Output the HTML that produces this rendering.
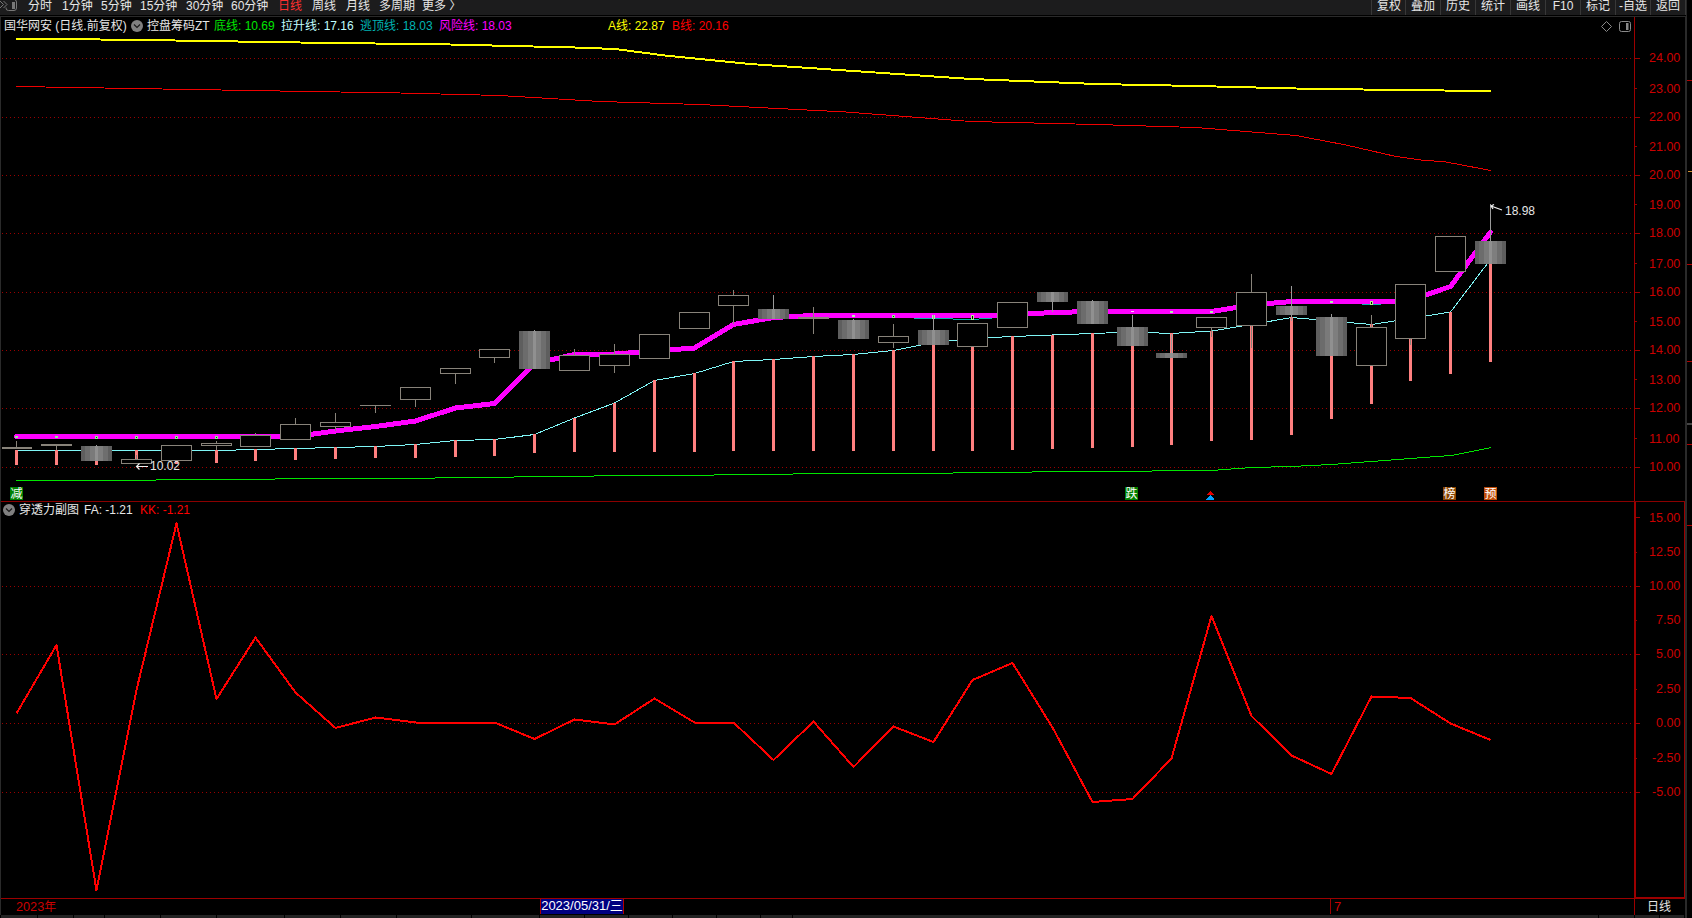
<!DOCTYPE html><html><head><meta charset="utf-8"><title>chart</title><style>
html,body{margin:0;padding:0;background:#000;}
body{width:1692px;height:918px;overflow:hidden;position:relative;font-family:"Liberation Sans","Noto Sans CJK SC",sans-serif;font-size:12px;color:#e6e6e6;}
.t{position:absolute;white-space:nowrap;line-height:14px;height:14px;}
#top{position:absolute;left:0;top:0;width:1685px;height:15px;background:#1c1c1d;}
#topb{position:absolute;left:0;top:15px;width:1686px;height:1px;background:#000;}
#topl{position:absolute;left:0;top:16px;width:1687px;height:1px;background:#2a2a2a;}
.sep{position:absolute;top:0;width:1px;height:15px;background:#383838;}
.ax{position:absolute;left:1649px;width:34px;font-size:12.5px;text-align:left;color:#cc0000;line-height:14px;height:14px;}
.ic{position:absolute;width:13px;height:12px;padding-top:1px;line-height:13px;font-size:12px;color:#fff;text-align:center;overflow:hidden;}
.circ{position:absolute;width:12px;height:12px;border-radius:6px;background:#808080;}
#bot{position:absolute;left:1px;top:915px;width:1684px;height:3px;background:#232323;}
.bs{position:absolute;top:915px;width:1px;height:3px;background:#000;}
</style></head><body>
<div id="top"></div><div id="topb"></div><div id="topl"></div>
<svg width="1692" height="918" viewBox="0 0 1692 918" shape-rendering="crispEdges" style="position:absolute;left:0;top:0">
<defs><linearGradient id="g" x1="0" x2="1" y1="0" y2="0">
<stop offset="0" stop-color="#5e5e5e"/>
<stop offset="0.13" stop-color="#5e5e5e"/>
<stop offset="0.13" stop-color="#6c6c6c"/>
<stop offset="0.29" stop-color="#6c6c6c"/>
<stop offset="0.29" stop-color="#7a7a7a"/>
<stop offset="0.45" stop-color="#7a7a7a"/>
<stop offset="0.45" stop-color="#909090"/>
<stop offset="0.55" stop-color="#909090"/>
<stop offset="0.55" stop-color="#7e7e7e"/>
<stop offset="0.71" stop-color="#7e7e7e"/>
<stop offset="0.71" stop-color="#6e6e6e"/>
<stop offset="0.87" stop-color="#6e6e6e"/>
<stop offset="0.87" stop-color="#5e5e5e"/>
<stop offset="1" stop-color="#5e5e5e"/>
</linearGradient></defs>
<line x1="2" x2="1632" y1="58.5" y2="58.5" stroke="#9a0000" stroke-width="1" stroke-dasharray="1 3"/>
<line x1="2" x2="1632" y1="117.5" y2="117.5" stroke="#9a0000" stroke-width="1" stroke-dasharray="1 3"/>
<line x1="2" x2="1632" y1="175.5" y2="175.5" stroke="#9a0000" stroke-width="1" stroke-dasharray="1 3"/>
<line x1="2" x2="1632" y1="233.5" y2="233.5" stroke="#9a0000" stroke-width="1" stroke-dasharray="1 3"/>
<line x1="2" x2="1632" y1="292.5" y2="292.5" stroke="#9a0000" stroke-width="1" stroke-dasharray="1 3"/>
<line x1="2" x2="1632" y1="350.5" y2="350.5" stroke="#9a0000" stroke-width="1" stroke-dasharray="1 3"/>
<line x1="2" x2="1632" y1="408.5" y2="408.5" stroke="#9a0000" stroke-width="1" stroke-dasharray="1 3"/>
<line x1="2" x2="1632" y1="467.5" y2="467.5" stroke="#9a0000" stroke-width="1" stroke-dasharray="1 3"/>
<line x1="2" x2="1632" y1="586.5" y2="586.5" stroke="#9a0000" stroke-width="1" stroke-dasharray="1 3"/>
<line x1="2" x2="1632" y1="654.5" y2="654.5" stroke="#9a0000" stroke-width="1" stroke-dasharray="1 3"/>
<line x1="2" x2="1632" y1="723.5" y2="723.5" stroke="#9a0000" stroke-width="1" stroke-dasharray="1 3"/>
<line x1="2" x2="1632" y1="792.5" y2="792.5" stroke="#9a0000" stroke-width="1" stroke-dasharray="1 3"/>
<polyline points="16,39 100,39.5 175,40.5 300,42.5 450,44.5 575,47.5 615,49 665,55.5 750,64 846,70.5 971,79 1096,84 1196,86 1296,88.5 1396,90 1491,91" fill="none" stroke="#ffff00" stroke-width="2"/>
<polyline points="16,86.5 250,90.5 400,93 500,95.5 600,101.5 700,104.5 846,112 971,121.5 1096,124.5 1196,127.5 1296,135.5 1346,145 1396,156.5 1421,160 1446,162 1491,170.5" fill="none" stroke="#f00000" stroke-width="1"/>
<rect x="16" y="480" width="140" height="1" fill="#00e600"/>
<rect x="156" y="479" width="119" height="1" fill="#00e600"/>
<rect x="275" y="478" width="160" height="1" fill="#00e600"/>
<rect x="435" y="477" width="79" height="1" fill="#00e600"/>
<rect x="514" y="476" width="80" height="1" fill="#00e600"/>
<rect x="594" y="475" width="120" height="1" fill="#00e600"/>
<rect x="714" y="474" width="79" height="1" fill="#00e600"/>
<rect x="793" y="473" width="160" height="1" fill="#00e600"/>
<rect x="953" y="472" width="79" height="1" fill="#00e600"/>
<rect x="1032" y="471" width="120" height="1" fill="#00e600"/>
<rect x="1152" y="470" width="66" height="1" fill="#00e600"/>
<rect x="1218" y="469" width="13" height="1" fill="#00e600"/>
<rect x="1231" y="468" width="14" height="1" fill="#00e600"/>
<rect x="1245" y="467" width="26" height="1" fill="#00e600"/>
<rect x="1271" y="466" width="30" height="1" fill="#00e600"/>
<rect x="1301" y="465" width="20" height="1" fill="#00e600"/>
<rect x="1321" y="464" width="17" height="1" fill="#00e600"/>
<rect x="1338" y="463" width="13" height="1" fill="#00e600"/>
<rect x="1351" y="462" width="13" height="1" fill="#00e600"/>
<rect x="1364" y="461" width="14" height="1" fill="#00e600"/>
<rect x="1378" y="460" width="13" height="1" fill="#00e600"/>
<rect x="1391" y="459" width="13" height="1" fill="#00e600"/>
<rect x="1404" y="458" width="13" height="1" fill="#00e600"/>
<rect x="1417" y="457" width="13" height="1" fill="#00e600"/>
<rect x="1430" y="456" width="14" height="1" fill="#00e600"/>
<rect x="1444" y="455" width="10" height="1" fill="#00e600"/>
<polyline points="1454,455 1491,447.6" fill="none" stroke="#00e600" stroke-width="1"/>
<g stroke="#ff00ff" stroke-width="5" stroke-linecap="round">
<line x1="16.5" y1="436.5" x2="16.5" y2="436.5"/>
<line x1="16.5" y1="436.5" x2="56.5" y2="436.5"/>
<line x1="56.5" y1="436.5" x2="96.5" y2="436.5"/>
<line x1="96.5" y1="436.5" x2="136.5" y2="436.5"/>
<line x1="136.5" y1="436.5" x2="176.5" y2="436.5"/>
<line x1="176.5" y1="436.5" x2="216.5" y2="436.5"/>
<line x1="216.5" y1="436.5" x2="255.5" y2="436.5"/>
<line x1="255.5" y1="436.5" x2="295.5" y2="436.5"/>
<line x1="295.5" y1="436.5" x2="335.5" y2="431"/>
<line x1="335.5" y1="431" x2="375.5" y2="426.5"/>
<line x1="375.5" y1="426.5" x2="415.5" y2="421"/>
<line x1="415.5" y1="421" x2="455.5" y2="408"/>
<line x1="455.5" y1="408" x2="494.5" y2="403.5"/>
<line x1="494.5" y1="403.5" x2="534.5" y2="363.5"/>
<line x1="534.5" y1="363.5" x2="574.5" y2="354.5"/>
<line x1="574.5" y1="354.5" x2="614.5" y2="354"/>
<line x1="614.5" y1="354" x2="654.5" y2="351"/>
<line x1="654.5" y1="351" x2="694.5" y2="348"/>
<line x1="694.5" y1="348" x2="733.5" y2="324.5"/>
<line x1="733.5" y1="324.5" x2="773.5" y2="317.5"/>
<line x1="773.5" y1="317.5" x2="813.5" y2="315.5"/>
<line x1="813.5" y1="315.5" x2="853.5" y2="315.5"/>
<line x1="853.5" y1="315.5" x2="893.5" y2="315.5"/>
<line x1="893.5" y1="315.5" x2="933.5" y2="315.5"/>
<line x1="933.5" y1="315.5" x2="972.5" y2="315.5"/>
<line x1="972.5" y1="315.5" x2="1012.5" y2="315"/>
<line x1="1012.5" y1="315" x2="1052.5" y2="312.5"/>
<line x1="1052.5" y1="312.5" x2="1092.5" y2="311.5"/>
<line x1="1092.5" y1="311.5" x2="1132.5" y2="311.5"/>
<line x1="1132.5" y1="311.5" x2="1171.5" y2="311.5"/>
<line x1="1171.5" y1="311.5" x2="1211.5" y2="311.5"/>
<line x1="1211.5" y1="311.5" x2="1251.5" y2="305"/>
<line x1="1251.5" y1="305" x2="1291.5" y2="301.5"/>
<line x1="1291.5" y1="301.5" x2="1331.5" y2="301.5"/>
<line x1="1331.5" y1="301.5" x2="1371.5" y2="301.5"/>
<line x1="1371.5" y1="301.5" x2="1395" y2="301.5"/>
<line x1="1395" y1="301.5" x2="1410.5" y2="300"/>
<line x1="1410.5" y1="300" x2="1450.5" y2="286.5"/>
<line x1="1450.5" y1="286.5" x2="1490.5" y2="232"/>
</g>
<rect x="914" y="318" width="39" height="1" fill="#00b4aa"/><rect x="953" y="319" width="26" height="1" fill="#00b4aa"/><rect x="979" y="318" width="13" height="1" fill="#00b4aa"/>
<rect x="1362" y="304" width="19" height="1" fill="#00b4aa"/>
<polyline points="16.5,450.5 56.5,450.5 96.5,450.5 136.5,450.5 176.5,450.5 216.5,450.5 255.5,449.5 295.5,448.5 335.5,447.5 375.5,446.5 415.5,444.5 455.5,440.5 494.5,439.5 534.5,434.5 574.5,418 614.5,403 654.5,380.5 694.5,373.5 733.5,361.5 773.5,359.5 813.5,356.5 853.5,354.5 893.5,350.5 933.5,342.5 972.5,338.5 1012.5,336.5 1052.5,335 1092.5,333.5 1132.5,332 1171.5,333.5 1211.5,331 1251.5,324.5 1291.5,317.5 1331.5,321 1371.5,324.5 1410.5,318.5 1450.5,312 1490.5,259.5" fill="none" stroke="#7ff6f6" stroke-width="1"/>
<rect x="15" y="450" width="3" height="15" fill="#ff8080"/>
<rect x="55" y="450" width="3" height="15" fill="#ff8080"/>
<rect x="95" y="450" width="3" height="15" fill="#ff8080"/>
<rect x="135" y="450" width="3" height="13" fill="#ff8080"/>
<rect x="175" y="450" width="3" height="14" fill="#ff8080"/>
<rect x="215" y="450" width="3" height="13" fill="#ff8080"/>
<rect x="254" y="449" width="3" height="12" fill="#ff8080"/>
<rect x="294" y="448" width="3" height="12" fill="#ff8080"/>
<rect x="334" y="447" width="3" height="12" fill="#ff8080"/>
<rect x="374" y="446" width="3" height="12" fill="#ff8080"/>
<rect x="414" y="444" width="3" height="14" fill="#ff8080"/>
<rect x="454" y="440" width="3" height="17" fill="#ff8080"/>
<rect x="493" y="439" width="3" height="17" fill="#ff8080"/>
<rect x="533" y="434" width="3" height="19" fill="#ff8080"/>
<rect x="573" y="418" width="3" height="34" fill="#ff8080"/>
<rect x="613" y="403" width="3" height="49" fill="#ff8080"/>
<rect x="653" y="380" width="3" height="72" fill="#ff8080"/>
<rect x="693" y="373" width="3" height="79" fill="#ff8080"/>
<rect x="732" y="361" width="3" height="90" fill="#ff8080"/>
<rect x="772" y="359" width="3" height="92" fill="#ff8080"/>
<rect x="812" y="356" width="3" height="95" fill="#ff8080"/>
<rect x="852" y="354" width="3" height="97" fill="#ff8080"/>
<rect x="892" y="350" width="3" height="101" fill="#ff8080"/>
<rect x="932" y="342" width="3" height="109" fill="#ff8080"/>
<rect x="971" y="338" width="3" height="113" fill="#ff8080"/>
<rect x="1011" y="336" width="3" height="114" fill="#ff8080"/>
<rect x="1051" y="335" width="3" height="114" fill="#ff8080"/>
<rect x="1091" y="333" width="3" height="115" fill="#ff8080"/>
<rect x="1131" y="332" width="3" height="115" fill="#ff8080"/>
<rect x="1170" y="333" width="3" height="112" fill="#ff8080"/>
<rect x="1210" y="331" width="3" height="110" fill="#ff8080"/>
<rect x="1250" y="324" width="3" height="116" fill="#ff8080"/>
<rect x="1290" y="317" width="3" height="118" fill="#ff8080"/>
<rect x="1330" y="321" width="3" height="98" fill="#ff8080"/>
<rect x="1370" y="324" width="3" height="80" fill="#ff8080"/>
<rect x="1409" y="318" width="3" height="63" fill="#ff8080"/>
<rect x="1449" y="312" width="3" height="62" fill="#ff8080"/>
<rect x="1489" y="264" width="3" height="98" fill="#ff8080"/>
<rect x="16" y="441" width="1" height="8" fill="#88837a"/>
<rect x="2" y="447" width="30" height="2" fill="#88837a"/>
<rect x="56" y="444" width="1" height="6" fill="#88837a"/>
<rect x="41" y="444" width="31" height="2" fill="#88837a"/>
<rect x="96" y="445" width="1" height="16" fill="#9a9a9a"/>
<rect x="81" y="446" width="31" height="15" fill="url(#g)"/>
<rect x="136" y="455" width="1" height="9" fill="#88837a"/>
<rect x="121" y="459" width="31" height="5" fill="#88837a"/>
<rect x="122" y="460" width="29" height="3" fill="#000"/>
<rect x="176" y="445" width="1" height="16" fill="#88837a"/>
<rect x="161" y="445" width="31" height="16" fill="#88837a"/>
<rect x="162" y="446" width="29" height="14" fill="#000"/>
<rect x="216" y="441" width="1" height="9" fill="#88837a"/>
<rect x="201" y="443" width="31" height="3" fill="#88837a"/>
<rect x="202" y="444" width="29" height="1" fill="#000"/>
<rect x="255" y="433" width="1" height="14" fill="#88837a"/>
<rect x="240" y="435" width="31" height="12" fill="#88837a"/>
<rect x="241" y="436" width="29" height="10" fill="#000"/>
<rect x="295" y="418" width="1" height="22" fill="#88837a"/>
<rect x="280" y="424" width="31" height="16" fill="#88837a"/>
<rect x="281" y="425" width="29" height="14" fill="#000"/>
<rect x="335" y="413" width="1" height="18" fill="#88837a"/>
<rect x="320" y="422" width="31" height="5" fill="#88837a"/>
<rect x="321" y="423" width="29" height="3" fill="#000"/>
<rect x="375" y="405" width="1" height="8" fill="#88837a"/>
<rect x="360" y="405" width="31" height="1" fill="#88837a"/>
<rect x="415" y="387" width="1" height="20" fill="#88837a"/>
<rect x="400" y="387" width="31" height="13" fill="#88837a"/>
<rect x="401" y="388" width="29" height="11" fill="#000"/>
<rect x="455" y="368" width="1" height="16" fill="#88837a"/>
<rect x="440" y="368" width="31" height="6" fill="#88837a"/>
<rect x="441" y="369" width="29" height="4" fill="#000"/>
<rect x="494" y="349" width="1" height="14" fill="#88837a"/>
<rect x="479" y="349" width="31" height="9" fill="#88837a"/>
<rect x="480" y="350" width="29" height="7" fill="#000"/>
<rect x="534" y="330" width="1" height="39" fill="#9a9a9a"/>
<rect x="519" y="331" width="31" height="38" fill="url(#g)"/>
<rect x="574" y="349" width="1" height="22" fill="#88837a"/>
<rect x="559" y="355" width="31" height="16" fill="#88837a"/>
<rect x="560" y="356" width="29" height="14" fill="#000"/>
<rect x="614" y="344" width="1" height="29" fill="#88837a"/>
<rect x="599" y="354" width="31" height="12" fill="#88837a"/>
<rect x="600" y="355" width="29" height="10" fill="#000"/>
<rect x="654" y="334" width="1" height="25" fill="#88837a"/>
<rect x="639" y="334" width="31" height="25" fill="#88837a"/>
<rect x="640" y="335" width="29" height="23" fill="#000"/>
<rect x="694" y="312" width="1" height="17" fill="#88837a"/>
<rect x="679" y="312" width="31" height="17" fill="#88837a"/>
<rect x="680" y="313" width="29" height="15" fill="#000"/>
<rect x="733" y="290" width="1" height="34" fill="#88837a"/>
<rect x="718" y="295" width="31" height="11" fill="#88837a"/>
<rect x="719" y="296" width="29" height="9" fill="#000"/>
<rect x="773" y="295" width="1" height="24" fill="#9a9a9a"/>
<rect x="758" y="309" width="31" height="10" fill="url(#g)"/>
<rect x="813" y="307" width="1" height="27" fill="#88837a"/>
<rect x="798" y="317" width="31" height="2" fill="#88837a"/>
<rect x="853" y="319" width="1" height="20" fill="#9a9a9a"/>
<rect x="838" y="320" width="31" height="19" fill="url(#g)"/>
<rect x="893" y="324" width="1" height="24" fill="#88837a"/>
<rect x="878" y="336" width="31" height="7" fill="#88837a"/>
<rect x="879" y="337" width="29" height="5" fill="#000"/>
<rect x="933" y="315" width="1" height="30" fill="#9a9a9a"/>
<rect x="918" y="330" width="31" height="15" fill="url(#g)"/>
<rect x="972" y="323" width="1" height="24" fill="#88837a"/>
<rect x="957" y="323" width="31" height="24" fill="#88837a"/>
<rect x="958" y="324" width="29" height="22" fill="#000"/>
<rect x="1012" y="302" width="1" height="26" fill="#88837a"/>
<rect x="997" y="302" width="31" height="26" fill="#88837a"/>
<rect x="998" y="303" width="29" height="24" fill="#000"/>
<rect x="1052" y="292" width="1" height="20" fill="#9a9a9a"/>
<rect x="1037" y="292" width="31" height="10" fill="url(#g)"/>
<rect x="1092" y="300" width="1" height="24" fill="#9a9a9a"/>
<rect x="1077" y="301" width="31" height="23" fill="url(#g)"/>
<rect x="1132" y="315" width="1" height="31" fill="#9a9a9a"/>
<rect x="1117" y="327" width="31" height="19" fill="url(#g)"/>
<rect x="1171" y="334" width="1" height="24" fill="#9a9a9a"/>
<rect x="1156" y="353" width="31" height="5" fill="url(#g)"/>
<rect x="1211" y="317" width="1" height="20" fill="#88837a"/>
<rect x="1196" y="317" width="31" height="11" fill="#88837a"/>
<rect x="1197" y="318" width="29" height="9" fill="#000"/>
<rect x="1251" y="274" width="1" height="74" fill="#88837a"/>
<rect x="1236" y="292" width="31" height="34" fill="#88837a"/>
<rect x="1237" y="293" width="29" height="32" fill="#000"/>
<rect x="1291" y="286" width="1" height="35" fill="#9a9a9a"/>
<rect x="1276" y="306" width="31" height="9" fill="url(#g)"/>
<rect x="1331" y="314" width="1" height="42" fill="#9a9a9a"/>
<rect x="1316" y="317" width="31" height="39" fill="url(#g)"/>
<rect x="1371" y="315" width="1" height="51" fill="#88837a"/>
<rect x="1356" y="327" width="31" height="39" fill="#88837a"/>
<rect x="1357" y="328" width="29" height="37" fill="#000"/>
<rect x="1410" y="284" width="1" height="61" fill="#88837a"/>
<rect x="1395" y="284" width="31" height="55" fill="#88837a"/>
<rect x="1396" y="285" width="29" height="53" fill="#000"/>
<rect x="1450" y="236" width="1" height="36" fill="#88837a"/>
<rect x="1435" y="236" width="31" height="36" fill="#88837a"/>
<rect x="1436" y="237" width="29" height="34" fill="#000"/>
<rect x="1490" y="204" width="1" height="60" fill="#9a9a9a"/>
<rect x="1475" y="241" width="31" height="23" fill="url(#g)"/>
<rect x="15" y="436" width="3" height="2" fill="#90ee90"/>
<rect x="55" y="436" width="3" height="2" fill="#90ee90"/>
<rect x="95" y="436" width="3" height="3" fill="#90ee90"/><rect x="96" y="437" width="1" height="1" fill="#004000"/>
<rect x="135" y="436" width="3" height="3" fill="#90ee90"/><rect x="136" y="437" width="1" height="1" fill="#004000"/>
<rect x="175" y="436" width="3" height="3" fill="#90ee90"/><rect x="176" y="437" width="1" height="1" fill="#004000"/>
<rect x="215" y="436" width="3" height="3" fill="#90ee90"/><rect x="216" y="437" width="1" height="1" fill="#004000"/>
<rect x="892" y="315" width="3" height="3" fill="#90ee90"/><rect x="893" y="316" width="1" height="1" fill="#004000"/>
<rect x="852" y="315" width="3" height="2" fill="#b0f0b0"/>
<rect x="1170" y="311" width="3" height="2" fill="#b0f0b0"/>
<rect x="1210" y="311" width="3" height="2" fill="#b0f0b0"/>
<rect x="1330" y="301" width="3" height="2" fill="#b0f0b0"/>
<rect x="1131" y="311" width="3" height="1" fill="#ffd0ff"/>
<rect x="932" y="315" width="1" height="4" fill="#b0f0b0"/><rect x="934" y="315" width="1" height="4" fill="#b0f0b0"/>
<rect x="971" y="315" width="3" height="5" fill="#b4f090"/><rect x="972" y="316" width="1" height="3" fill="#000"/>
<rect x="1370" y="301" width="3" height="4" fill="#b4f090"/><rect x="1371" y="302" width="1" height="2" fill="#000"/>
<polyline points="16.5,713.5 56.5,645 96.5,890.5 136.5,690 176.5,523.5 216.5,699 255.5,637.5 295.5,692.5 335.5,728 375.5,717.5 415.5,722.5 455.5,722.5 494.5,722.5 534.5,739 574.5,719.5 614.5,724.5 654.5,698.5 694.5,722.5 733.5,722.5 773.5,760 813.5,721.5 853.5,767 893.5,726.5 933.5,742 972.5,680 1012.5,663 1052.5,727.5 1092.5,802 1132.5,799 1171.5,758.5 1211.5,616 1251.5,716 1291.5,755.5 1331.5,774 1371.5,696.5 1410.5,698 1450.5,723.5 1490.5,740" fill="none" stroke="#ff0000" stroke-width="2" stroke-linejoin="round"/>
<rect x="1" y="501" width="1684" height="1" fill="#8b0000"/>
<rect x="1" y="898" width="1684" height="1" fill="#9c0000"/>
<rect x="1634" y="17" width="1" height="484" fill="#9c0000"/>
<rect x="1634" y="502" width="2" height="397" fill="#9c0000"/>
<rect x="1634" y="899" width="1" height="16" fill="#9c0000"/>
<rect x="1634" y="897" width="51" height="1" fill="#9c0000"/>
<rect x="1684" y="502" width="1" height="397" fill="#9c0000"/>
<rect x="1635" y="58" width="5" height="1" fill="#9c0000"/>
<rect x="1635" y="88" width="2" height="1" fill="#9c0000"/>
<rect x="1635" y="117" width="5" height="1" fill="#9c0000"/>
<rect x="1635" y="146" width="2" height="1" fill="#9c0000"/>
<rect x="1635" y="175" width="5" height="1" fill="#9c0000"/>
<rect x="1635" y="204" width="2" height="1" fill="#9c0000"/>
<rect x="1635" y="233" width="5" height="1" fill="#9c0000"/>
<rect x="1635" y="263" width="2" height="1" fill="#9c0000"/>
<rect x="1635" y="292" width="5" height="1" fill="#9c0000"/>
<rect x="1635" y="321" width="2" height="1" fill="#9c0000"/>
<rect x="1635" y="350" width="5" height="1" fill="#9c0000"/>
<rect x="1635" y="379" width="2" height="1" fill="#9c0000"/>
<rect x="1635" y="408" width="5" height="1" fill="#9c0000"/>
<rect x="1635" y="438" width="2" height="1" fill="#9c0000"/>
<rect x="1635" y="467" width="5" height="1" fill="#9c0000"/>
<rect x="1635" y="517" width="5" height="1" fill="#9c0000"/>
<rect x="1635" y="552" width="2" height="1" fill="#9c0000"/>
<rect x="1635" y="586" width="5" height="1" fill="#9c0000"/>
<rect x="1635" y="620" width="2" height="1" fill="#9c0000"/>
<rect x="1635" y="654" width="5" height="1" fill="#9c0000"/>
<rect x="1635" y="689" width="2" height="1" fill="#9c0000"/>
<rect x="1635" y="723" width="5" height="1" fill="#9c0000"/>
<rect x="1635" y="758" width="2" height="1" fill="#9c0000"/>
<rect x="1635" y="792" width="5" height="1" fill="#9c0000"/>
<rect x="0" y="16" width="1" height="899" fill="#2a2a2a"/>
<rect x="1685" y="16" width="2" height="902" fill="#2a2a2a"/>
<rect x="1685" y="0" width="1" height="16" fill="#000"/><rect x="1686" y="0" width="1" height="16" fill="#262626"/><rect x="1687" y="0" width="5" height="16" fill="#000"/>
<rect x="1687" y="80" width="5" height="1" fill="#b00000"/>
<rect x="1688" y="171" width="4" height="1" fill="#d09030"/>
<rect x="1687" y="264" width="5" height="1" fill="#b00000"/>
<rect x="1687" y="361" width="5" height="1" fill="#b00000"/>
<rect x="1687" y="423" width="5" height="2" fill="#444"/>
<rect x="1687" y="444" width="5" height="1" fill="#b00000"/>
<rect x="1687" y="525" width="5" height="1" fill="#b00000"/>
<rect x="1330" y="899" width="1" height="15" fill="#9c0000"/>
<g shape-rendering="auto" stroke="#f0f0f0" stroke-width="1.2" fill="none"><path d="M136.5 466.5H148M139.5 463.5L136.5 466.5L139.5 469.5"/><path d="M1491 206L1502 210M1494 204.5L1491 206L1493 209"/></g>
<polygon points="1210.5,490.5 1214.5,495 1206.5,495" fill="#e00000"/><polygon points="1210.5,495 1214.5,499.5 1206.5,499.5" fill="#00a0ff"/>
<g shape-rendering="auto" fill="none" stroke="#8a8a8a" stroke-width="1"><path d="M1606.5 21.5L1611.5 26.5L1606.5 31.5L1601.5 26.5Z"/><rect x="1619.5" y="21.5" width="11" height="10" rx="2"/><rect x="1626" y="23" width="2.5" height="7" fill="#8a8a8a" stroke="none"/></g>
</svg>
<div class="t" style="left:28px;top:-1px;">分时</div>
<div class="t" style="left:62px;top:-1px;">1分钟</div>
<div class="t" style="left:101px;top:-1px;">5分钟</div>
<div class="t" style="left:140px;top:-1px;">15分钟</div>
<div class="t" style="left:186px;top:-1px;">30分钟</div>
<div class="t" style="left:231px;top:-1px;">60分钟</div>
<div class="t" style="left:278px;top:-1px;color:#ff3030;">日线</div>
<div class="t" style="left:312px;top:-1px;">周线</div>
<div class="t" style="left:346px;top:-1px;">月线</div>
<div class="t" style="left:379px;top:-1px;">多周期</div>
<div class="t" style="left:422px;top:-1px;">更多 〉</div>
<div class="sep" style="left:1371px"></div>
<div class="sep" style="left:1405px"></div>
<div class="sep" style="left:1440px"></div>
<div class="sep" style="left:1475px"></div>
<div class="sep" style="left:1510px"></div>
<div class="sep" style="left:1545px"></div>
<div class="sep" style="left:1580px"></div>
<div class="sep" style="left:1615px"></div>
<div class="sep" style="left:1650px"></div>
<div class="sep" style="left:1685px"></div>
<div class="t" style="left:1372px;top:-1px;width:34px;text-align:center">复权</div>
<div class="t" style="left:1406px;top:-1px;width:34px;text-align:center">叠加</div>
<div class="t" style="left:1441px;top:-1px;width:34px;text-align:center">历史</div>
<div class="t" style="left:1476px;top:-1px;width:34px;text-align:center">统计</div>
<div class="t" style="left:1511px;top:-1px;width:34px;text-align:center">画线</div>
<div class="t" style="left:1546px;top:-1px;width:34px;text-align:center">F10</div>
<div class="t" style="left:1581px;top:-1px;width:34px;text-align:center">标记</div>
<div class="t" style="left:1616px;top:-1px;width:34px;text-align:center">-自选</div>
<div class="t" style="left:1651px;top:-1px;width:34px;text-align:center">返回</div>
<svg width="20" height="14" style="position:absolute;left:0;top:0" fill="none" stroke="#777" stroke-width="1"><path d="M0 1L3.5 4.5L0 8M3.5 1L7 4.5L3.5 8M6 7.5V8Q6 10.5 8.5 10.5H14Q16.5 10.5 16.5 8V2Q16.5 0 15 0"/><rect x="12" y="2" width="3" height="7" fill="#777" stroke="none"/></svg>
<div class="t" style="left:4px;top:19px">国华网安 (日线.前复权)</div>
<div class="circ" style="left:131px;top:20px"></div><svg width="12" height="12" style="position:absolute;left:131px;top:20px"><path d="M3 4.5L6 7.5L9 4.5" fill="none" stroke="#1a1a1a" stroke-width="1.2"/></svg>
<div class="t" style="left:147px;top:19px">控盘筹码ZT</div>
<div class="t" style="left:214px;top:19px;color:#00e600">底线: 10.69</div>
<div class="t" style="left:281px;top:19px;color:#c0ffff">拉升线: 17.16</div>
<div class="t" style="left:360px;top:19px;color:#00b4b4">逃顶线: 18.03</div>
<div class="t" style="left:439px;top:19px;color:#ff00ff">风险线: 18.03</div>
<div class="t" style="left:608px;top:19px;color:#ffff00">A线: 22.87</div>
<div class="t" style="left:672px;top:19px;color:#ff0000">B线: 20.16</div>
<div class="circ" style="left:3px;top:504px"></div><svg width="12" height="12" style="position:absolute;left:3px;top:504px"><path d="M3 4.5L6 7.5L9 4.5" fill="none" stroke="#1a1a1a" stroke-width="1.2"/></svg>
<div class="t" style="left:19px;top:503px">穿透力副图</div>
<div class="t" style="left:84px;top:503px">FA: -1.21</div>
<div class="t" style="left:140px;top:503px;color:#ff0000">KK: -1.21</div>
<div class="ax" style="top:51px;left:1649px">24.00</div>
<div class="ax" style="top:82px;left:1649px">23.00</div>
<div class="ax" style="top:110px;left:1649px">22.00</div>
<div class="ax" style="top:140px;left:1649px">21.00</div>
<div class="ax" style="top:168px;left:1649px">20.00</div>
<div class="ax" style="top:198px;left:1649px">19.00</div>
<div class="ax" style="top:226px;left:1649px">18.00</div>
<div class="ax" style="top:257px;left:1649px">17.00</div>
<div class="ax" style="top:285px;left:1649px">16.00</div>
<div class="ax" style="top:315px;left:1649px">15.00</div>
<div class="ax" style="top:343px;left:1649px">14.00</div>
<div class="ax" style="top:373px;left:1649px">13.00</div>
<div class="ax" style="top:401px;left:1649px">12.00</div>
<div class="ax" style="top:432px;left:1649px">11.00</div>
<div class="ax" style="top:460px;left:1649px">10.00</div>
<div class="ax" style="top:511px;left:1649px">15.00</div>
<div class="ax" style="top:545px;left:1649px">12.50</div>
<div class="ax" style="top:579px;left:1649px">10.00</div>
<div class="ax" style="top:613px;left:1656px">7.50</div>
<div class="ax" style="top:647px;left:1656px">5.00</div>
<div class="ax" style="top:682px;left:1656px">2.50</div>
<div class="ax" style="top:716px;left:1656px">0.00</div>
<div class="ax" style="top:751px;left:1652px">-2.50</div>
<div class="ax" style="top:785px;left:1652px">-5.00</div>
<div class="t" style="left:150px;top:459px">10.02</div>
<div class="t" style="left:1505px;top:204px">18.98</div>
<div class="ic" style="left:10px;top:487px;background:#008000">减</div>
<div class="ic" style="left:1125px;top:487px;background:#008000">跌</div>
<div class="ic" style="left:1443px;top:487px;background:#8b4500">榜</div>
<div class="ic" style="left:1484px;top:487px;background:#c04c08">预</div>
<div class="t" style="left:16px;top:900px;color:#cc0000"><span style="font-size:12.7px">2023</span>年</div>
<div class="t" style="left:540px;top:899px;width:82px;height:15px;line-height:14px;background:#000080;border-left:1px solid #b00000;border-right:1px solid #b00000;color:#fff;font-size:13px;text-align:center">2023/05/31/三</div>
<div class="t" style="left:1334px;top:900px;color:#cc0000;font-size:13px">7</div>
<div class="t" style="left:1647px;top:900px;color:#e6e6e6">日线</div>
<div id="bot"></div>
<div class="bs" style="left:37px"></div>
<div class="bs" style="left:73px"></div>
<div class="bs" style="left:104px"></div>
<div class="bs" style="left:160px"></div>
<div class="bs" style="left:216px"></div>
<div class="bs" style="left:284px"></div>
<div class="bs" style="left:340px"></div>
<div class="bs" style="left:396px"></div>
<div class="bs" style="left:471px"></div>
<div class="bs" style="left:539px"></div>
<div class="bs" style="left:584px"></div>
<div class="bs" style="left:628px"></div>
<div class="bs" style="left:672px"></div>
<div class="bs" style="left:716px"></div>
<div class="bs" style="left:760px"></div>
<div class="bs" style="left:792px"></div>
<div class="bs" style="left:1598px"></div>
<div class="bs" style="left:1634px"></div>
<div class="bs" style="left:1659px"></div>
<div class="bs" style="left:1684px"></div>
</body></html>
